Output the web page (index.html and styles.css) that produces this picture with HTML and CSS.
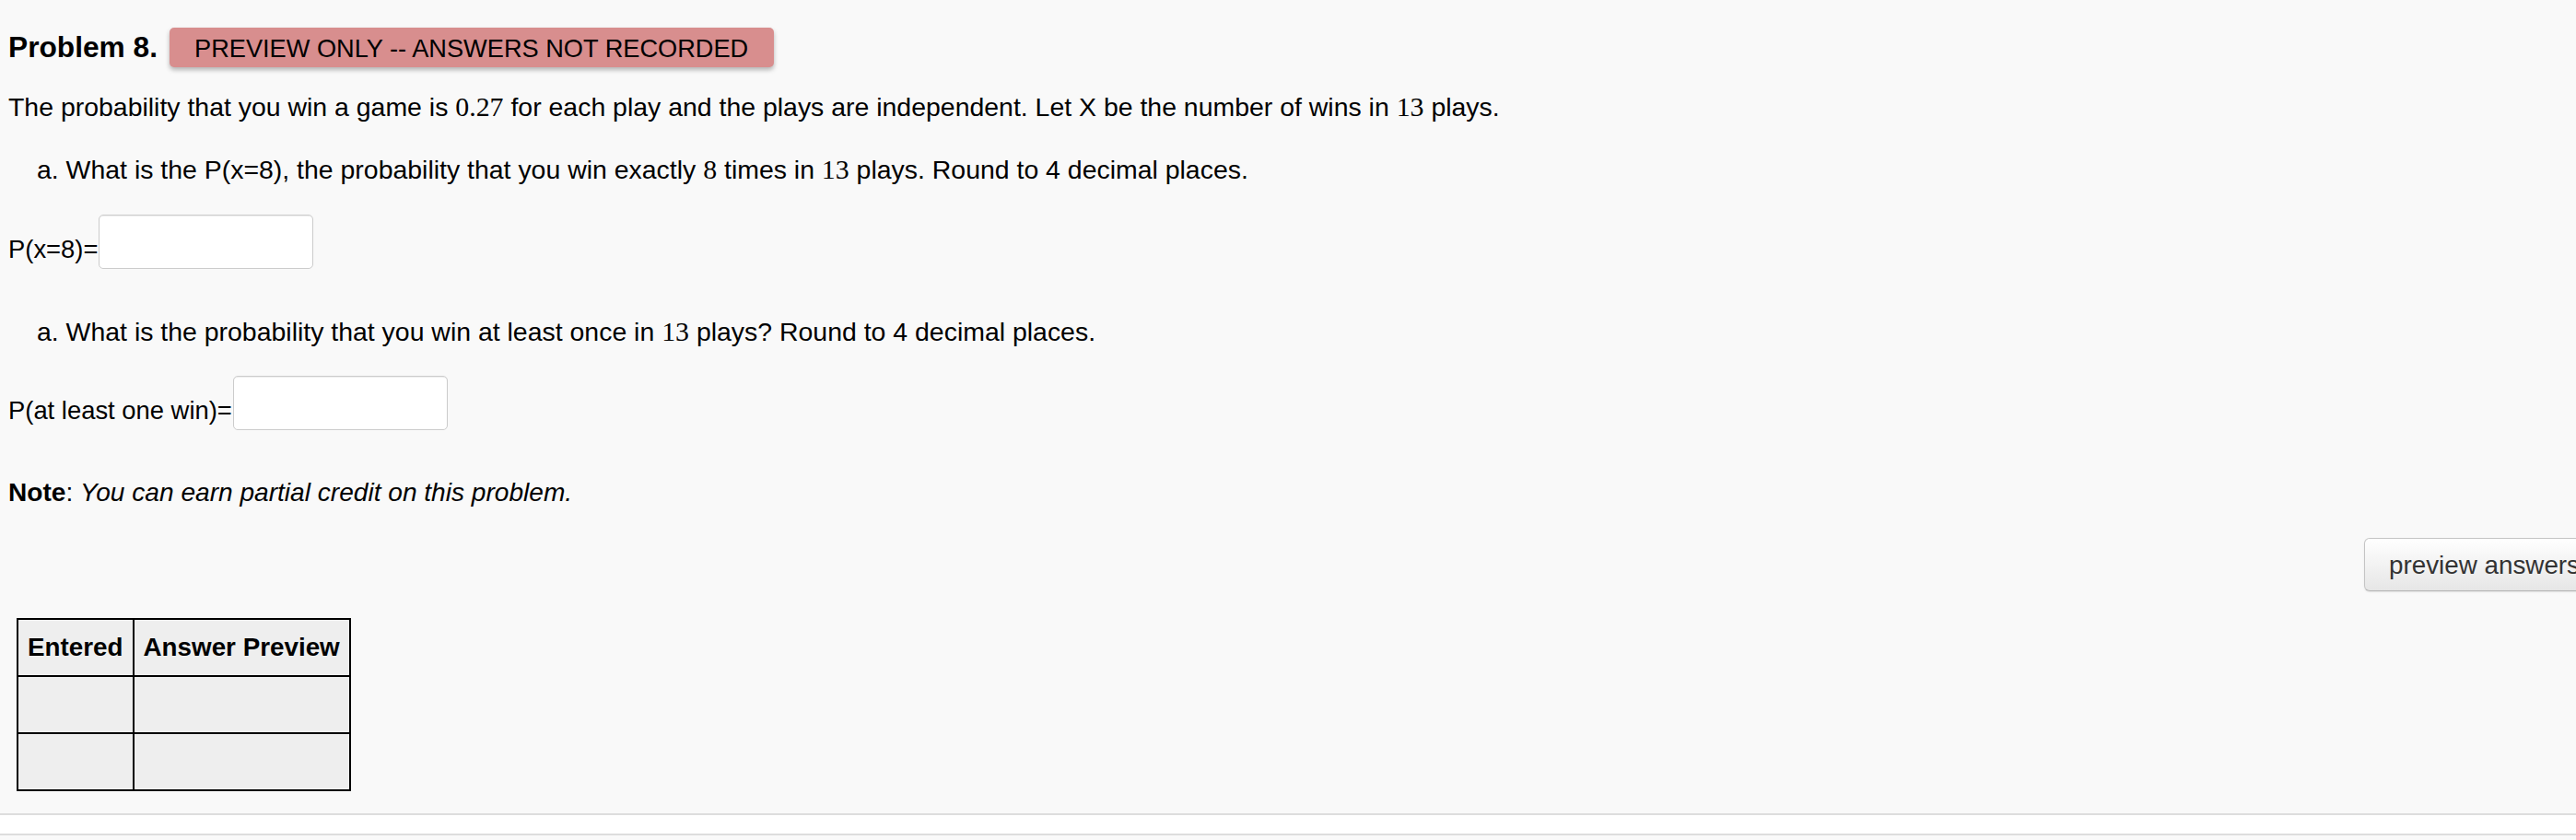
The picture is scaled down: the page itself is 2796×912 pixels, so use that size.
FILE: index.html
```html
<!DOCTYPE html>
<html lang="en">
<head>
<meta charset="utf-8">
<title>Problem 8</title>
<link rel="stylesheet" href="styles.css">
</head>
<body>
<div class="problem">
  <div class="heading">
    <h3 class="title">Problem 8.</h3>
    <span class="badge">PREVIEW ONLY -- ANSWERS NOT RECORDED</span>
  </div>
  <p class="intro">The probability that you win a game is <span class="math">0.27</span> for each play and the plays are independent. Let X be the number of wins in <span class="math">13</span> plays.</p>
  <p class="question q1">a. What is the P(x=8), the probability that you win exactly <span class="math">8</span> times in <span class="math">13</span> plays. Round to 4 decimal places.</p>
  <div class="answer-line a1"><label for="ans1">P(x=8)=</label><input id="ans1" class="answer" type="text"></div>
  <p class="question q2">a. What is the probability that you win at least once in <span class="math">13</span> plays? Round to 4 decimal places.</p>
  <div class="answer-line a2"><label for="ans2">P(at least one win)=</label><input id="ans2" class="answer" type="text"></div>
  <p class="note"><b>Note</b>: <i>You can earn partial credit on this problem.</i></p>
  <div class="actions"><button class="btn" type="button">preview answers</button></div>
  <table class="results">
    <tr><th>Entered</th><th>Answer Preview</th></tr>
    <tr><td>&nbsp;</td><td>&nbsp;</td></tr>
    <tr><td>&nbsp;</td><td>&nbsp;</td></tr>
  </table>
</div>
<div class="footer-strip"></div>
</body>
</html>
```

FILE: styles.css
```css
html {
  overflow: hidden;
  background: #f9f9f9;
}
body {
  margin: 0;
  background: #f9f9f9;
  font-family: "Liberation Sans", Arial, Helvetica, sans-serif;
  font-size: 28px;
  line-height: 40px;
  color: #000;
}
.problem {
  padding: 30px 0 0 9px;
}
.heading {
  display: flex;
  align-items: baseline;
  gap: 13px;
}
.title {
  margin: 0;
  font-size: 31.7px;
  font-weight: bold;
  line-height: 40px;
}
.badge {
  font-size: 27.2px;
  line-height: 40px;
  padding: 3px 28px 0 27px;
  background: #d88e8e;
  border-radius: 5px;
  box-shadow: 0 3px 5px rgba(0, 0, 0, 0.28);
  color: #000;
}
.math {
  font-family: "Liberation Serif", "Times New Roman", serif;
  font-size: 1.05em;
}
.intro,
.question {
  font-size: 28.45px;
}
.intro {
  margin: 23px 0 0;
}
.question {
  margin: 28px 0 0;
  padding-left: 31px;
}
.q2 {
  margin-top: 48px;
}
.answer-line {
  margin-top: 29px;
  font-size: 27.4px;
}
.a2 {
  margin-top: 28px;
}
.answer-line label {
  margin-right: 1px;
}
.answer {
  box-sizing: border-box;
  width: 233px;
  height: 59px;
  margin: 0;
  padding: 17px 8px 0;
  border: 1px solid #cccccc;
  border-radius: 5px;
  background: #fff;
  box-shadow: inset 0 1px 1px rgba(0, 0, 0, 0.075);
  font-family: inherit;
  font-size: 27.4px;
  vertical-align: baseline;
  outline: none;
}
.note {
  margin: 48px 0 0;
  font-size: 28.1px;
}
.actions {
  display: flex;
  justify-content: flex-end;
  margin: 29px -31px 0 0;
}
.btn {
  box-sizing: border-box;
  height: 58px;
  padding: 2px 26px 0;
  font-family: inherit;
  font-size: 27.8px;
  color: #333;
  background: linear-gradient(#ffffff, #e6e6e6);
  border: 1px solid #c4c4c4;
  border-bottom-color: #b3b3b3;
  border-radius: 6px;
  box-shadow: inset 0 1px 0 rgba(255, 255, 255, 0.2), 0 1px 2px rgba(0, 0, 0, 0.08);
}
.results {
  margin: 29px 0 0 9px;
  border-collapse: collapse;
  border: 2px solid #000;
  font-size: 27.8px;
}
.results th,
.results td {
  border: 2px solid #000;
  background: #eeeeee;
  height: 60px;
  padding: 0 10px;
  text-align: left;
  line-height: 40px;
}
.results th {
  font-weight: bold;
}
.footer-strip {
  margin-top: 24px;
  height: 20px;
  background: #fff;
  border-top: 2px solid #dddddd;
  border-bottom: 2px solid #dddddd;
}
```
